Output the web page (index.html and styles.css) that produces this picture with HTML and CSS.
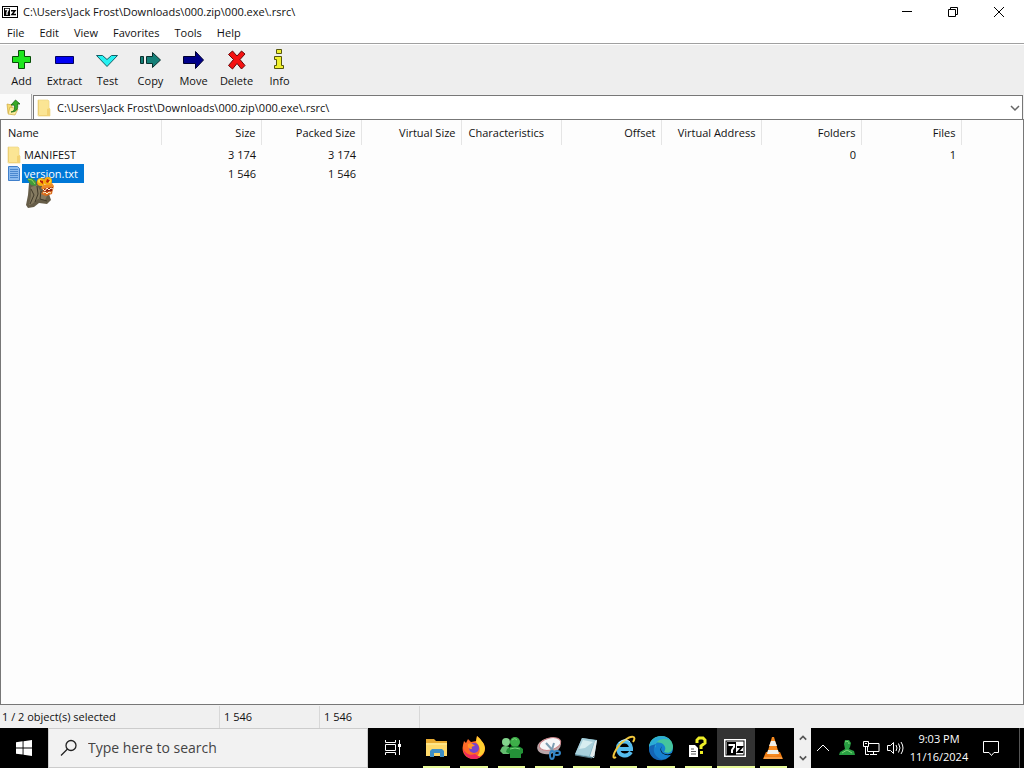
FILE: index.html
```html
<!DOCTYPE html>
<html lang="en">
<head>
	<meta charset="UTF-8">
	<title>C:\Users\Jack Frost\Downloads\000.zip\000.exe\.rsrc\</title>
	<link rel="stylesheet" href="styles.css">
</head>
<body>
	<svg class="defs" aria-hidden="true">
		<symbol id="folder" viewBox="0 0 16 18">
			<path d="M2 1h10l1 1v14H2z" fill="#fbe594"/>
			<path d="M2 1h1v15H2z" fill="#eccb6a"/>
			<path d="M11 10l3-1v8H3l-1-1h9z" fill="#f3d272"/>
			<path d="M2 1h10l1 1v7l1 1v7H2z" fill="none" stroke="#eed584" stroke-width=".7"/>
		</symbol>
		<symbol id="seven" viewBox="0 0 24 20">
			<rect x="1" y="1" width="22" height="18" fill="#fff"/>
			<rect x="3" y="3" width="18" height="14" fill="none" stroke="#000" stroke-width="1"/>
			<rect x="4" y="4" width="9" height="13" fill="#000"/>
			<path d="M5.500 7h5.500v2l-2 3v3" fill="none" stroke="#fff" stroke-width="2"/>
			<path d="M14 9h5l-4 5h5" fill="none" stroke="#000" stroke-width="2"/>
		</symbol>
	</svg>

	<div class="window">
		<header class="titlebar">
			<svg class="logo" viewBox="0 0 16 12">
				<rect x=".5" y=".5" width="15" height="11" fill="#fff" stroke="#000"/>
				<rect x="2" y="2" width="6" height="8" fill="#000"/>
				<path d="M3 3.500h3.500L5 6.500V9" fill="none" stroke="#fff" stroke-width="1.300"/>
				<path d="M9 4.700h4L10 8.500h4" fill="none" stroke="#000" stroke-width="1.500"/>
			</svg>
			<span class="title">C:\Users\Jack Frost\Downloads\000.zip\000.exe\.rsrc\</span>
			<button class="control" aria-label="Minimize"><svg viewBox="0 0 12 12"><path d="M1 5.500h10"/></svg></button>
			<button class="control" aria-label="Restore"><svg viewBox="0 0 12 12"><path d="M1.500 3.500h7v7h-7zM3.500 3V1.500h7v7H9"/></svg></button>
			<button class="control" aria-label="Close"><svg viewBox="0 0 12 12"><path d="M1 1l10 10M11 1L1 11"/></svg></button>
		</header>

		<nav class="menu">
			<button>File</button>
			<button>Edit</button>
			<button>View</button>
			<button>Favorites</button>
			<button>Tools</button>
			<button>Help</button>
		</nav>

		<div class="toolbar">
			<button>
				<svg viewBox="0 0 24 24"><path d="M8.500 2.500h6v6h6v6h-6v6h-6v-6h-6v-6h6z" fill="#1ee61e" stroke="#064d06"/></svg>
				Add
			</button>
			<button>
				<svg viewBox="0 0 24 24"><path d="M2.500 8.500h18v7h-18z" fill="#0000f4" stroke="#000060"/></svg>
				Extract
			</button>
			<button>
				<svg viewBox="0 0 24 24"><path d="M.5 7.500h6l4.500 4 4.500-4h6L11 18.500z" fill="#25f2f2" stroke="#155e66"/></svg>
				Test
			</button>
			<button>
				<svg viewBox="0 0 24 24"><path d="M1.500 8.500h3v7h-3zM7.500 8.500h6v-4l8 7.500-8 7.500v-4h-6z" fill="#158078" stroke="#082f2d"/></svg>
				Copy
			</button>
			<button>
				<svg viewBox="0 0 24 24"><path d="M1.500 8.500h12v-5l8 8.500-8 8.500v-5h-12z" fill="#00008a" stroke="#000030"/></svg>
				Move
			</button>
			<button>
				<svg viewBox="0 0 24 24"><path d="M3.500 6.500l4-3.500 4.500 5 4.500-5 3.500 3-5 5.500 5 6-3.500 3.500-4.500-5.500L7.500 21 3.500 17.500l5-6z" fill="#f51212" stroke="#650808"/></svg>
				Delete
			</button>
			<button>
				<svg viewBox="0 0 24 24"><path d="M8.500 1.500h5v4h-5zM6.500 8.500h7v9h2v3h-9v-3h2v-6h-2z" fill="#eff02e" stroke="#55550c"/></svg>
				Info
			</button>
		</div>

		<div class="address">
			<button class="up" aria-label="Up one level">
				<svg viewBox="0 0 16 18">
					<path d="M2 6l5 1v9l-4-1z" fill="#f7dc72" stroke="#cfa940" stroke-width=".7"/>
					<path d="M3 16l2-7 8 2-3 6z" fill="#fbec9c" stroke="#cfa940" stroke-width=".7"/>
					<path d="M6 14c4-1 4-4 3-7H6l4.500-5L15 6h-2.500c1 5-1 8-6.500 8z" fill="#37aa25" stroke="#176415" stroke-width=".8"/>
				</svg>
			</button>
			<div class="path">
				<svg class="folder"><use href="#folder"/></svg>
				<select aria-label="Path">
					<option>C:\Users\Jack Frost\Downloads\000.zip\000.exe\.rsrc\</option>
				</select>
				<svg class="arrow" viewBox="0 0 10 10"><path d="M1 3l4 4 4-4" fill="none" stroke="#666" stroke-width="1.500"/></svg>
			</div>
		</div>

		<main class="files">
			<table>
				<thead>
					<tr>
						<th class="name">Name</th>
						<th>Size</th>
						<th>Packed Size</th>
						<th>Virtual Size</th>
						<th class="left">Characteristics</th>
						<th>Offset</th>
						<th>Virtual Address</th>
						<th>Folders</th>
						<th>Files</th>
						<th class="rest"></th>
					</tr>
				</thead>
				<tbody>
					<tr>
						<td class="name"><div class="item"><svg class="folder"><use href="#folder"/></svg><span>MANIFEST</span></div></td>
						<td>3 174</td>
						<td>3 174</td>
						<td></td>
						<td></td>
						<td></td>
						<td></td>
						<td>0</td>
						<td>1</td>
						<td></td>
					</tr>
					<tr>
						<td class="name"><div class="item selected">
							<svg class="folder" viewBox="0 0 16 18">
								<path d="M2.500 1.500h9l2 2v12h-11z" fill="#8dbcf0" stroke="#3f7fcb"/>
								<path d="M4 4.500h8M4 6.500h8M4 8.500h8M4 10.500h8M4 12.500h8" stroke="#4a88d0"/>
							</svg><span>version.txt</span>
						</div></td>
						<td>1 546</td>
						<td>1 546</td>
						<td></td>
						<td></td>
						<td></td>
						<td></td>
						<td></td>
						<td></td>
						<td></td>
					</tr>
				</tbody>
			</table>
			<!-- custom mouse cursor -->
			<svg class="cursor" viewBox="0 0 30 32">
				<path d="M3 6l7-2 6 4 2 6 5 3 2 6-4 4-8-1-5 4-6 1-2-3 2-10z" fill="#665d48"/>
				<path d="M5 10l6-2 4 7 6 4-2 4-7-1-6 5-3 1 2-9z" fill="#857a60"/>
				<path d="M5 12l3 6-4 9M11 9l1 8-3 8M15 14l-1 8 7 2" fill="none" stroke="#40392a"/>
				<path d="M1 2l5-1 4 3v5l-5-1z" fill="#419b3c"/>
				<path d="M2 2l4 1 3 4" fill="none" stroke="#9ad257"/>
				<path d="M17 8l9-2 2 3-1 4-9 1-3-3z" fill="#ec8a28"/>
				<path d="M17 14l10-2-1 5-6 2-5-2z" fill="#da6c1c"/>
				<path d="M17 12l10-2-1 4-8 1z" fill="#8f1e0c"/>
				<path d="M17 12l2 2 2-3 2 2 2-2 2 1M17 16l2-1 2 2 2-2 2 1" fill="none" stroke="#fff1cc"/>
				<circle cx="15" cy="5" r="4" fill="#f7a90c"/>
				<circle cx="22" cy="4" r="4" fill="#f7a90c"/>
				<circle cx="14" cy="4" r="2" fill="#ffe43c"/>
				<circle cx="23" cy="4" r="2" fill="#ffe43c"/>
				<path d="M14 3l3 1v3l-3-2zM21 2l3 1-2 3-2-1z" fill="#bb2608"/>
			</svg>
		</main>

		<footer class="status">
			<span class="wide">1 / 2 object(s) selected</span>
			<span>1 546</span>
			<span>1 546</span>
		</footer>
	</div>

	<div class="taskbar">
		<button class="start" aria-label="Start">
			<svg viewBox="0 0 16 16" fill="#fff"><path d="M0 2.200L6.600 1.300v6.200H0zM7.500 1.200L16 0v7.500H7.500zM0 8.400h6.600v6.200L0 13.700zM7.500 8.400H16V16l-8.500-1.200z"/></svg>
		</button>
		<label class="search">
			<svg viewBox="0 0 18 18" fill="none" stroke="#222" stroke-width="1.300"><circle cx="11" cy="6.500" r="5"/><path d="M7.500 10L1 16.500"/></svg>
			<input type="text" placeholder="Type here to search" aria-label="Search">
		</label>
		<button class="taskview" aria-label="Task View">
			<svg viewBox="0 0 18 18" fill="none" stroke="#fff"><path d="M1.500 1v2.500h10V1M1.500 5.500h10v6h-10zM1.500 16v-2.500h10V16M15.500 1v15"/><path d="M14 5h3v3h-3z" fill="#fff" stroke="none"/></svg>
		</button>

		<div class="apps">
			<button aria-label="File Explorer"><svg viewBox="0 0 26 26">
				<path d="M2 4h8l2 2h11v15H2z" fill="#e9ac32"/>
				<path d="M2 8h21v13H2z" fill="#ffda6b"/>
				<path d="M6 22v-6l2-2h10l2 2v6h-4v-4h-6v4z" fill="#3f8fc4"/>
				<path d="M2 9h21" stroke="#fff0a5"/>
			</svg></button>
			<button aria-label="Firefox"><svg viewBox="0 0 26 26">
				<path d="M3 6l2 2 2-4 3 3 5-1 1-5c3 2 4 4 5 6l2 2c3 8-2 15-10 15S0 18 2 10z" fill="#ff6b27"/>
				<path d="M16 1c3 3 7 6 8 12 0 6-5 9-9 9 5-4 5-10 0-15z" fill="#ffcf30"/>
				<path d="M2 13c2 6 7 8 12 6l5 3c-4 4-16 3-17-9z" fill="#ef285f"/>
				<circle cx="13" cy="13" r="5" fill="#7744ce"/>
				<path d="M7 9c3-2 5 0 7 2-3 0-4 1-3 3-3 0-5-2-4-5z" fill="#ff9427"/>
			</svg></button>
			<button aria-label="Messenger"><svg viewBox="0 0 26 26">
				<circle cx="8" cy="7" r="4" fill="#83d58c"/>
				<path d="M4 12q3-2 7 0v7H5l-3-3z" fill="#65bd70"/>
				<circle cx="17" cy="7" r="5" fill="#3eaf49"/>
				<path d="M9 14q3-3 8-3t8 3v4l-2 1v4H12v-4l-4-2z" fill="#249238"/>
				<path d="M14 5q3-3 5 0M12 14q5-2 10 0" fill="none" stroke="#79d57b"/>
			</svg></button>
			<button aria-label="Snipping Tool"><svg viewBox="0 0 26 26">
				<ellipse cx="13" cy="11" rx="12" ry="8" transform="rotate(-14 13 11)" fill="#b9a5a8"/>
				<ellipse cx="14" cy="9" rx="11" ry="6" transform="rotate(-14 14 9)" fill="#f6f7f9" stroke="#c98388"/>
				<path d="M10 8l9 10M18 8l-3 10" stroke="#7d9db2" stroke-width="2"/>
				<ellipse cx="21" cy="18" rx="3" ry="2" fill="none" stroke="#3486c6" stroke-width="2"/>
				<ellipse cx="16" cy="20" rx="2" ry="4" fill="none" stroke="#3486c6" stroke-width="2"/>
			</svg></button>
			<button aria-label="Notepad"><svg viewBox="0 0 26 26">
				<path d="M9 3l15 2-3 18-19-3z" fill="#80b5c5"/>
				<path d="M9 3l13 2-6 16-14-2z" fill="#a8cfda"/>
				<path d="M10 5l10 2-8 6-6 1z" fill="#d8eef1"/>
				<path d="M22 6l2-1-3 18-4-2z" fill="#e3eced"/>
				<path d="M2 20l17 3 2-2" fill="none" stroke="#597b88"/>
			</svg></button>
			<button aria-label="Internet Explorer"><svg viewBox="0 0 26 26">
				<path d="M20 17c-4 6-13 4-13-4s12-9 13 0v1H8" fill="none" stroke="#55bced" stroke-width="4"/>
				<path d="M5 22C-1 26 4 12 14 5c7-5 12-4 8 2" fill="none" stroke="#f3c83c" stroke-width="2"/>
				<path d="M8 8c3-4 8-4 11-1" fill="none" stroke="#bbecff"/>
			</svg></button>
			<button aria-label="Edge"><svg viewBox="0 0 26 26">
				<circle cx="13" cy="13" r="12" fill="#1680cf"/>
				<path d="M1 12C2-2 23-3 25 11c0 6-4 8-9 6 4-5-2-11-8-9-4 1-6 3-7 4z" fill="#45c49d"/>
				<path d="M1 12C2 1 17-2 22 5c-8-3-16 1-14 8-2-3-5-3-7-1z" fill="#2babd6"/>
				<path d="M8 9c-5 6-1 14 7 16C4 27-1 16 2 11z" fill="#1464b4"/>
				<path d="M14 11c-2 3-1 7 3 8 3 1 6 0 8-2l1 2-4 1c-7 1-12-4-8-9z" fill="#000"/>
			</svg></button>
			<button aria-label="Help"><svg viewBox="0 0 26 26">
				<path d="M12 8V5l2-2h4l2 2v3l-4 3v3" fill="none" stroke="#eeee27" stroke-width="3"/>
				<path d="M15 16h3v3h-3z" fill="#eeee27"/>
				<path d="M4 10h6l3 3v9H4z" fill="#fff"/>
				<path d="M6 14h3M6 16.500h5M6 19h5" stroke="#555"/>
			</svg></button>
			<button class="active" aria-label="7-Zip"><svg viewBox="0 0 26 26"><use href="#seven" x="0" y="3" width="24" height="20"/></svg></button>
			<button aria-label="VLC"><svg viewBox="0 0 26 26">
				<path d="M6 17h14l3 7H3z" fill="#ef7c13"/>
				<path d="M12 2h2l5 17c-3 3-9 3-12 0z" fill="#f58a20"/>
				<path d="M11 6h4l2 5H9zM8 15h10l1 4H7z" fill="#efefe9"/>
				<path d="M4 23h18" stroke="#ffc077"/>
			</svg></button>
		</div>

		<div class="scroll">
			<button aria-label="Scroll up"><svg viewBox="0 0 10 10"><path d="M1 7l4-4 4 4"/></svg></button>
			<button aria-label="Scroll down"><svg viewBox="0 0 10 10"><path d="M1 3l4 4 4-4"/></svg></button>
		</div>

		<div class="tray">
			<button aria-label="Show hidden icons"><svg viewBox="0 0 18 18"><path d="M3 12l6-6 6 6"/></svg></button>
			<button aria-label="Online"><svg viewBox="0 0 18 18">
				<path d="M7 1h4l2 3-1 4-1 2 5 2 1 4H1l1-3 5-3-1-5z" fill="#289f42" stroke="none"/>
				<path d="M7 3q4-2 4 2M4 14l5-3 5 3" stroke="#80d778"/>
			</svg></button>
			<button aria-label="Network"><svg viewBox="0 0 18 18"><path d="M6 4.500h11v8H5.500V8M8 15.500h7M11.500 13v2M1.500 2.500h5v5h-5zM3.500 8v7.500H7M3 4.500h2"/></svg></button>
			<button aria-label="Volume"><svg viewBox="0 0 18 18"><path d="M1.500 6.500h3l3-3v11l-3-3h-3zM10 6q2 3 0 6M12.500 4.500q3 4.500 0 9M15 3q4 6 0 12"/></svg></button>
			<button class="clock">9:03 PM<br>11/16/2024</button>
			<button class="notes" aria-label="Notifications"><svg viewBox="0 0 18 18"><path d="M1.500 2.500h15v11H12l-2.500 3-2.500-3H1.500z"/></svg></button>
			<button class="desktop" aria-label="Show desktop"></button>
		</div>
	</div>
</body>
</html>
```

FILE: styles.css
```css
*{
	box-sizing: border-box;
}
body{
	margin: 0;
	min-height: 100vh;
	display: flex;
	flex-direction: column;
	font: 11px/16px "Open Sans", "Noto Sans", sans-serif;
	color: #111;
	background-color: #fff;
}
button, input, select{
	font: inherit;
	color: inherit;
	background: none;
	border: 0;
	border-radius: 0;
	margin: 0;
	padding: 0;
}
svg{
	display: block;
	flex: none;
}
.defs{
	position: absolute;
	width: 0;
	height: 0;
}

.window{
	flex: 1;
	display: flex;
	flex-direction: column;
}
.titlebar{
	display: flex;
	align-items: center;
	height: 23px;
	padding-left: 2px;
}
.logo{
	width: 16px;
	height: 12px;
}
.title{
	flex: 1;
	padding-left: 5px;
}
.control{
	width: 46px;
	height: 22px;
	display: flex;
	align-items: center;
	justify-content: center;
}
.control svg{
	width: 12px;
	height: 12px;
	fill: none;
	stroke: #000;
}
.titlebar .control:last-child{
	margin-right: 2px;
}

.menu{
	display: flex;
	gap: 1px;
	height: 21px;
	border-bottom: 1px solid #a0a0a0;
}
.menu button{
	padding: 0 7px;
}

.toolbar{
	display: flex;
	height: 50px;
	background-color: #eee;
	border-top: 1px solid #fff;
}
.toolbar button{
	width: 43px;
	display: flex;
	flex-direction: column;
	align-items: center;
	padding-top: 3px;
	white-space: nowrap;
}
.toolbar svg{
	width: 24px;
	height: 24px;
	margin-bottom: 1px;
}

.address{
	display: flex;
	height: 25px;
	background-color: #f0f0f0;
}
.up{
	width: 32px;
	padding-left: 5px;
	background-color: #fbfbfb;
	border-right: 1px solid #aaa;
}
.up svg{
	width: 16px;
	height: 18px;
}
.path{
	flex: 1;
	display: flex;
	align-items: center;
	margin: 1px 1px 0;
	padding: 0 2px;
	background-color: #fff;
	border: 1px solid #777;
	border-bottom: 0;
}
.path select{
	flex: 1;
	appearance: none;
	padding-left: 5px;
}
.arrow{
	width: 10px;
	height: 10px;
}
.folder{
	width: 16px;
	height: 18px;
}

.files{
	flex: 1;
	position: relative;
	background-color: #fdfdfd;
	border: 1px solid #777;
}
table{
	width: 100%;
	table-layout: fixed;
	border-collapse: collapse;
}
th, td{
	width: 100px;
	height: 19px;
	padding: 0 5px;
	font-weight: normal;
	text-align: right;
	white-space: nowrap;
}
th{
	height: 25px;
	border-right: 1px solid #e5e5e5;
}
.name{
	width: 160px;
	text-align: left;
}
.left{
	padding-left: 7px;
	text-align: left;
}
.rest{
	width: auto;
	border: 0;
}
th.name{
	padding-left: 7px;
}
.item{
	display: flex;
	align-items: center;
	height: 19px;
}
.item span{
	padding: 0 6px 0 2px;
	line-height: 19px;
}
.selected span{
	color: #fff;
	background-color: #0078d7;
}
.cursor{
	position: absolute;
	left: 25px;
	top: 57px;
	width: 30px;
	height: 32px;
}

.status{
	display: flex;
	height: 23px;
	padding-top: 1px;
	background-color: #f0f0f0;
}
.status span{
	width: 100px;
	padding-left: 4px;
	line-height: 22px;
	border-right: 1px solid #d8d8d8;
}
.status .wide{
	width: 220px;
	padding-left: 2px;
}

.taskbar{
	display: flex;
	height: 40px;
	color: #fff;
	background-color: #000;
}
.taskbar button{
	display: flex;
	align-items: center;
	justify-content: center;
}
.start{
	width: 48px;
}
.start svg{
	width: 16px;
	height: 16px;
}
.search{
	width: 320px;
	display: flex;
	align-items: center;
	padding-left: 11px;
	background-color: #f2f2f2;
	border: 1px solid #ccc;
}
.search svg{
	width: 18px;
	height: 18px;
}
.search input{
	flex: 1;
	min-width: 0;
	padding-left: 10px;
	font-size: 14px;
	line-height: 20px;
	outline: 0;
}
.search input::placeholder{
	color: #444;
	opacity: 1;
}
.taskview{
	width: 49px;
}
.taskview svg{
	width: 18px;
	height: 18px;
}
.apps{
	flex: 1;
	display: grid;
	grid-template-columns: repeat(10, 1fr);
	padding: 0 2px 0 1px;
}
.apps button{
	position: relative;
}
.apps svg{
	width: 26px;
	height: 26px;
}
.apps button::after{
	content: "";
	position: absolute;
	left: 5px;
	right: 5px;
	bottom: 0;
	height: 2px;
	background-color: #e8fa98;
}
.apps .active{
	background-color: #333;
}
.apps .active::after{
	left: 0;
	right: 0;
}
.scroll{
	width: 17px;
	display: flex;
	flex-direction: column;
	background-color: #f0f0f0;
}
.scroll button{
	flex: 1;
}
.scroll svg{
	width: 8px;
	height: 8px;
	fill: none;
	stroke: #555;
	stroke-width: 2;
}
.tray{
	display: flex;
}
.tray button{
	width: 24px;
}
.tray svg{
	width: 18px;
	height: 18px;
	fill: none;
	stroke: #fff;
}
.tray .clock{
	width: 64px;
	line-height: 18px;
}
.tray .notes{
	width: 40px;
}
.tray .desktop{
	width: 5px;
	margin-left: 8px;
	border-left: 1px solid #555;
}
```
